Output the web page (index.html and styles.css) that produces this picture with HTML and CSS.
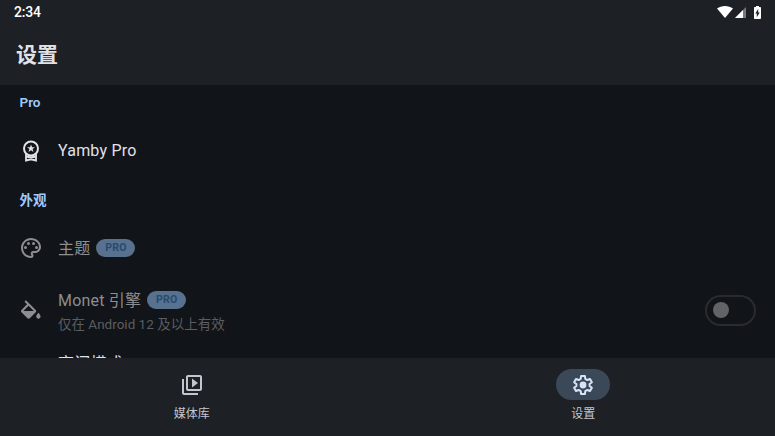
FILE: index.html
```html
<!DOCTYPE html>
<html lang="zh-CN">
<head>
  <meta charset="UTF-8" />
  <meta name="viewport" content="width=device-width, initial-scale=1.0"/>
  <title>设置</title>
  <link rel="stylesheet" href="styles.css">
</head>
<body>
  <header class="app-bar">
    <div class="status-bar">
      <span class="time">2:34</span>
      <div class="status-icons">
        <svg class="wifi" viewBox="0 0 16 12"><path d="M8 12 0 2.6C2.2.9 5 0 8 0s5.800.9 8 2.600z"/></svg>
        <svg class="signal" viewBox="0 0 11 11"><path d="M11 0v11H0z" opacity=".4"/><path d="M8 3v8H0z"/></svg>
        <svg class="battery" viewBox="0 0 7 13"><path fill-rule="evenodd" d="M2 0h3v1h1c.6 0 1 .4 1 1v10c0 .6-.4 1-1 1H1c-.6 0-1-.4-1-1V2c0-.6.4-1 1-1h1zM4.200 3 1.300 7.600h1.500v3.600l2.900-4.700H4.200z"/></svg>
      </div>
    </div>
    <h1>设置</h1>
  </header>

  <main class="settings">
    <h2 class="section section-pro">Pro</h2>
    <div class="row row-yamby">
      <svg class="icon" viewBox="0 0 24 24">
        <circle cx="12" cy="9.500" r="7" fill="none" stroke="currentColor" stroke-width="2"/>
        <path d="m12 5.400 1.050 2.800h2.950l-2.400 1.800.9 2.900-2.500-1.750-2.500 1.750.9-2.900L8 8.200h2.950z"/>
        <path d="M7 14.500v7l5-1.200 5 1.200v-7M7 17.500q5 1.200 10 0" fill="none" stroke="currentColor" stroke-width="1.800"/>
      </svg>
      <div class="title">Yamby Pro</div>
    </div>

    <h2 class="section section-look">外观</h2>
    <div class="row row-theme disabled">
      <svg class="icon" viewBox="0 0 24 24">
        <path d="M12 22C6.490 22 2 17.510 2 12S6.490 2 12 2s10 4.040 10 9c0 3.310-2.690 6-6 6h-1.770c-.28 0-.5.22-.5.5 0 .12.05.23.13.33.41.47.64 1.060.64 1.670A2.500 2.500 0 0 1 12 22zm0-18c-4.410 0-8 3.590-8 8s3.590 8 8 8c.28 0 .5-.22.5-.5a.54.54 0 0 0-.14-.35c-.41-.46-.63-1.050-.63-1.650a2.500 2.500 0 0 1 2.500-2.500H16c2.210 0 4-1.790 4-4 0-3.860-3.590-7-8-7z"/>
        <circle cx="6.500" cy="11.500" r="1.500"/><circle cx="9.500" cy="7.500" r="1.500"/><circle cx="14.500" cy="7.500" r="1.500"/><circle cx="17.500" cy="11.500" r="1.500"/>
      </svg>
      <div class="title">主题<span class="badge">PRO</span></div>
    </div>
    <div class="row row-monet disabled">
      <svg class="icon" viewBox="1.200 -2 22 22">
        <path d="M16.560 8.940L7.620 0 6.210 1.410l2.380 2.380-5.150 5.150c-.59.59-.59 1.540 0 2.120l5.500 5.500c.29.29.68.44 1.060.44s.77-.15 1.060-.44l5.500-5.500c.59-.58.59-1.530 0-2.120zM5.210 10L10 5.210 14.790 10H5.210zM19 11.500s-2 2.170-2 3.500c0 1.100.9 2 2 2s2-.9 2-2c0-1.330-2-3.500-2-3.500z"/>
      </svg>
      <div class="text">
        <div class="title">Monet 引擎<span class="badge">PRO</span></div>
        <div class="summary">仅在 Android 12 及以上有效</div>
      </div>
      <div class="switch"><span class="thumb"></span></div>
    </div>
    <div class="row row-night">
      <div class="title">夜间模式</div>
    </div>
  </main>

  <nav class="bottom-nav">
    <a class="nav-item">
      <span class="pill"><svg class="icon" viewBox="0 0 24 24"><path d="M4 6H2v14c0 1.100.9 2 2 2h14v-2H4V6zm16-4H8c-1.100 0-2 .9-2 2v12c0 1.100.9 2 2 2h12c1.100 0 2-.9 2-2V4c0-1.100-.9-2-2-2zm0 14H8V4h12v12zM12 5.500v9l6-4.500z"/></svg></span>
      <span class="label">媒体库</span>
    </a>
    <a class="nav-item active">
      <span class="pill"><svg class="icon" viewBox="0 0 24 24">
        <path d="m10.100 3-.4 2.900-2 1.150L5 5.950 3.100 9.250l2.300 1.750v2l-2.300 1.750L5 18.050l2.700-1.100 2 1.150.4 2.900h3.800l.4-2.900 2-1.150 2.700 1.100 1.900-3.300-2.300-1.750v-2l2.300-1.750L19 5.950l-2.700 1.100-2-1.150-.4-2.900z" fill="none" stroke="currentColor" stroke-width="2" stroke-linejoin="round"/>
        <circle cx="12" cy="12" r="3.400"/>
      </svg></span>
      <span class="label">设置</span>
    </a>
  </nav>
</body>
</html>
```
FILE: styles.css
```css
* {
  margin: 0;
  padding: 0;
  box-sizing: border-box;
}

body {
  font-family: Roboto, "Noto Sans CJK SC", sans-serif;
  background: #111418;
  color: #e1e2e8;
  display: flex;
  flex-direction: column;
  height: 100vh;
  overflow: hidden;
}

svg {
  display: block;
  fill: currentColor;
}

.app-bar {
  height: 85px;
  background: #1d2024;
  flex-shrink: 0;
}

.status-bar {
  height: 24px;
  padding: 0 14px;
  display: flex;
  align-items: center;
  justify-content: space-between;
  color: #fff;
}

.time {
  font-size: 14px;
  font-weight: 500;
  letter-spacing: -0.200px;
}

.status-icons {
  display: flex;
  align-items: center;
}

.wifi {
  width: 16px;
  height: 12px;
}

.signal {
  width: 11px;
  height: 11px;
  margin-left: 2px;
}

.battery {
  width: 7px;
  height: 13px;
  margin-left: 8px;
}

h1 {
  font-size: 21px;
  font-weight: 700;
  line-height: 30px;
  padding: 16px 16px 0;
}

.settings {
  flex: 1;
  min-height: 0;
  overflow: hidden;
}

.section {
  padding-left: 19.500px;
  font-size: 13.500px;
  font-weight: 600;
  color: #9fcaff;
}

.section-pro {
  height: 35px;
  line-height: 35px;
}

.section-look {
  height: 38px;
  line-height: 38px;
}

.row {
  display: flex;
  align-items: center;
  gap: 15px;
  padding: 0 19px;
}

.icon {
  width: 24px;
  height: 24px;
  flex-shrink: 0;
}

.row-yamby {
  height: 61px;
}

.row-theme {
  height: 58px;
}

.row-theme .title {
  padding-top: 1px;
}

.row-monet {
  height: 66px;
}

.row-night {
  height: 42px;
  padding-left: 58px;
}

.title {
  display: flex;
  align-items: center;
  font-size: 16px;
  line-height: 24px;
  letter-spacing: 0.200px;
}

.text {
  flex: 1;
  padding-top: 3px;
}

.summary {
  font-size: 13.500px;
  line-height: 22px;
  color: #5b5d61;
}

.disabled .icon,
.disabled .title {
  color: #8c8e91;
}

.badge {
  width: 39px;
  height: 18px;
  margin: -2px 0 0 6px;
  border-radius: 9px;
  background: #57718f;
  color: #254b70;
  font-size: 10.500px;
  font-weight: 700;
  line-height: 18px;
  text-align: center;
}

.switch {
  width: 51px;
  height: 31px;
  border: 2px solid #292b2f;
  border-radius: 16px;
  display: flex;
  align-items: center;
  padding-left: 6px;
}

.thumb {
  width: 16px;
  height: 16px;
  border-radius: 50%;
  background: #626367;
}

.bottom-nav {
  height: 78px;
  background: #1d2024;
  display: flex;
  gap: 8px;
  flex-shrink: 0;
}

.nav-item {
  flex: 1;
  display: flex;
  flex-direction: column;
  align-items: center;
  padding-top: 11px;
  color: #c3c6cf;
}

.pill {
  width: 54px;
  height: 31px;
  border-radius: 16px;
  display: flex;
  align-items: center;
  justify-content: center;
}

.active .pill {
  background: #3b4858;
  color: #d7e3f8;
}

.label {
  margin-top: 5px;
  font-size: 12px;
  line-height: 18px;
}
```
